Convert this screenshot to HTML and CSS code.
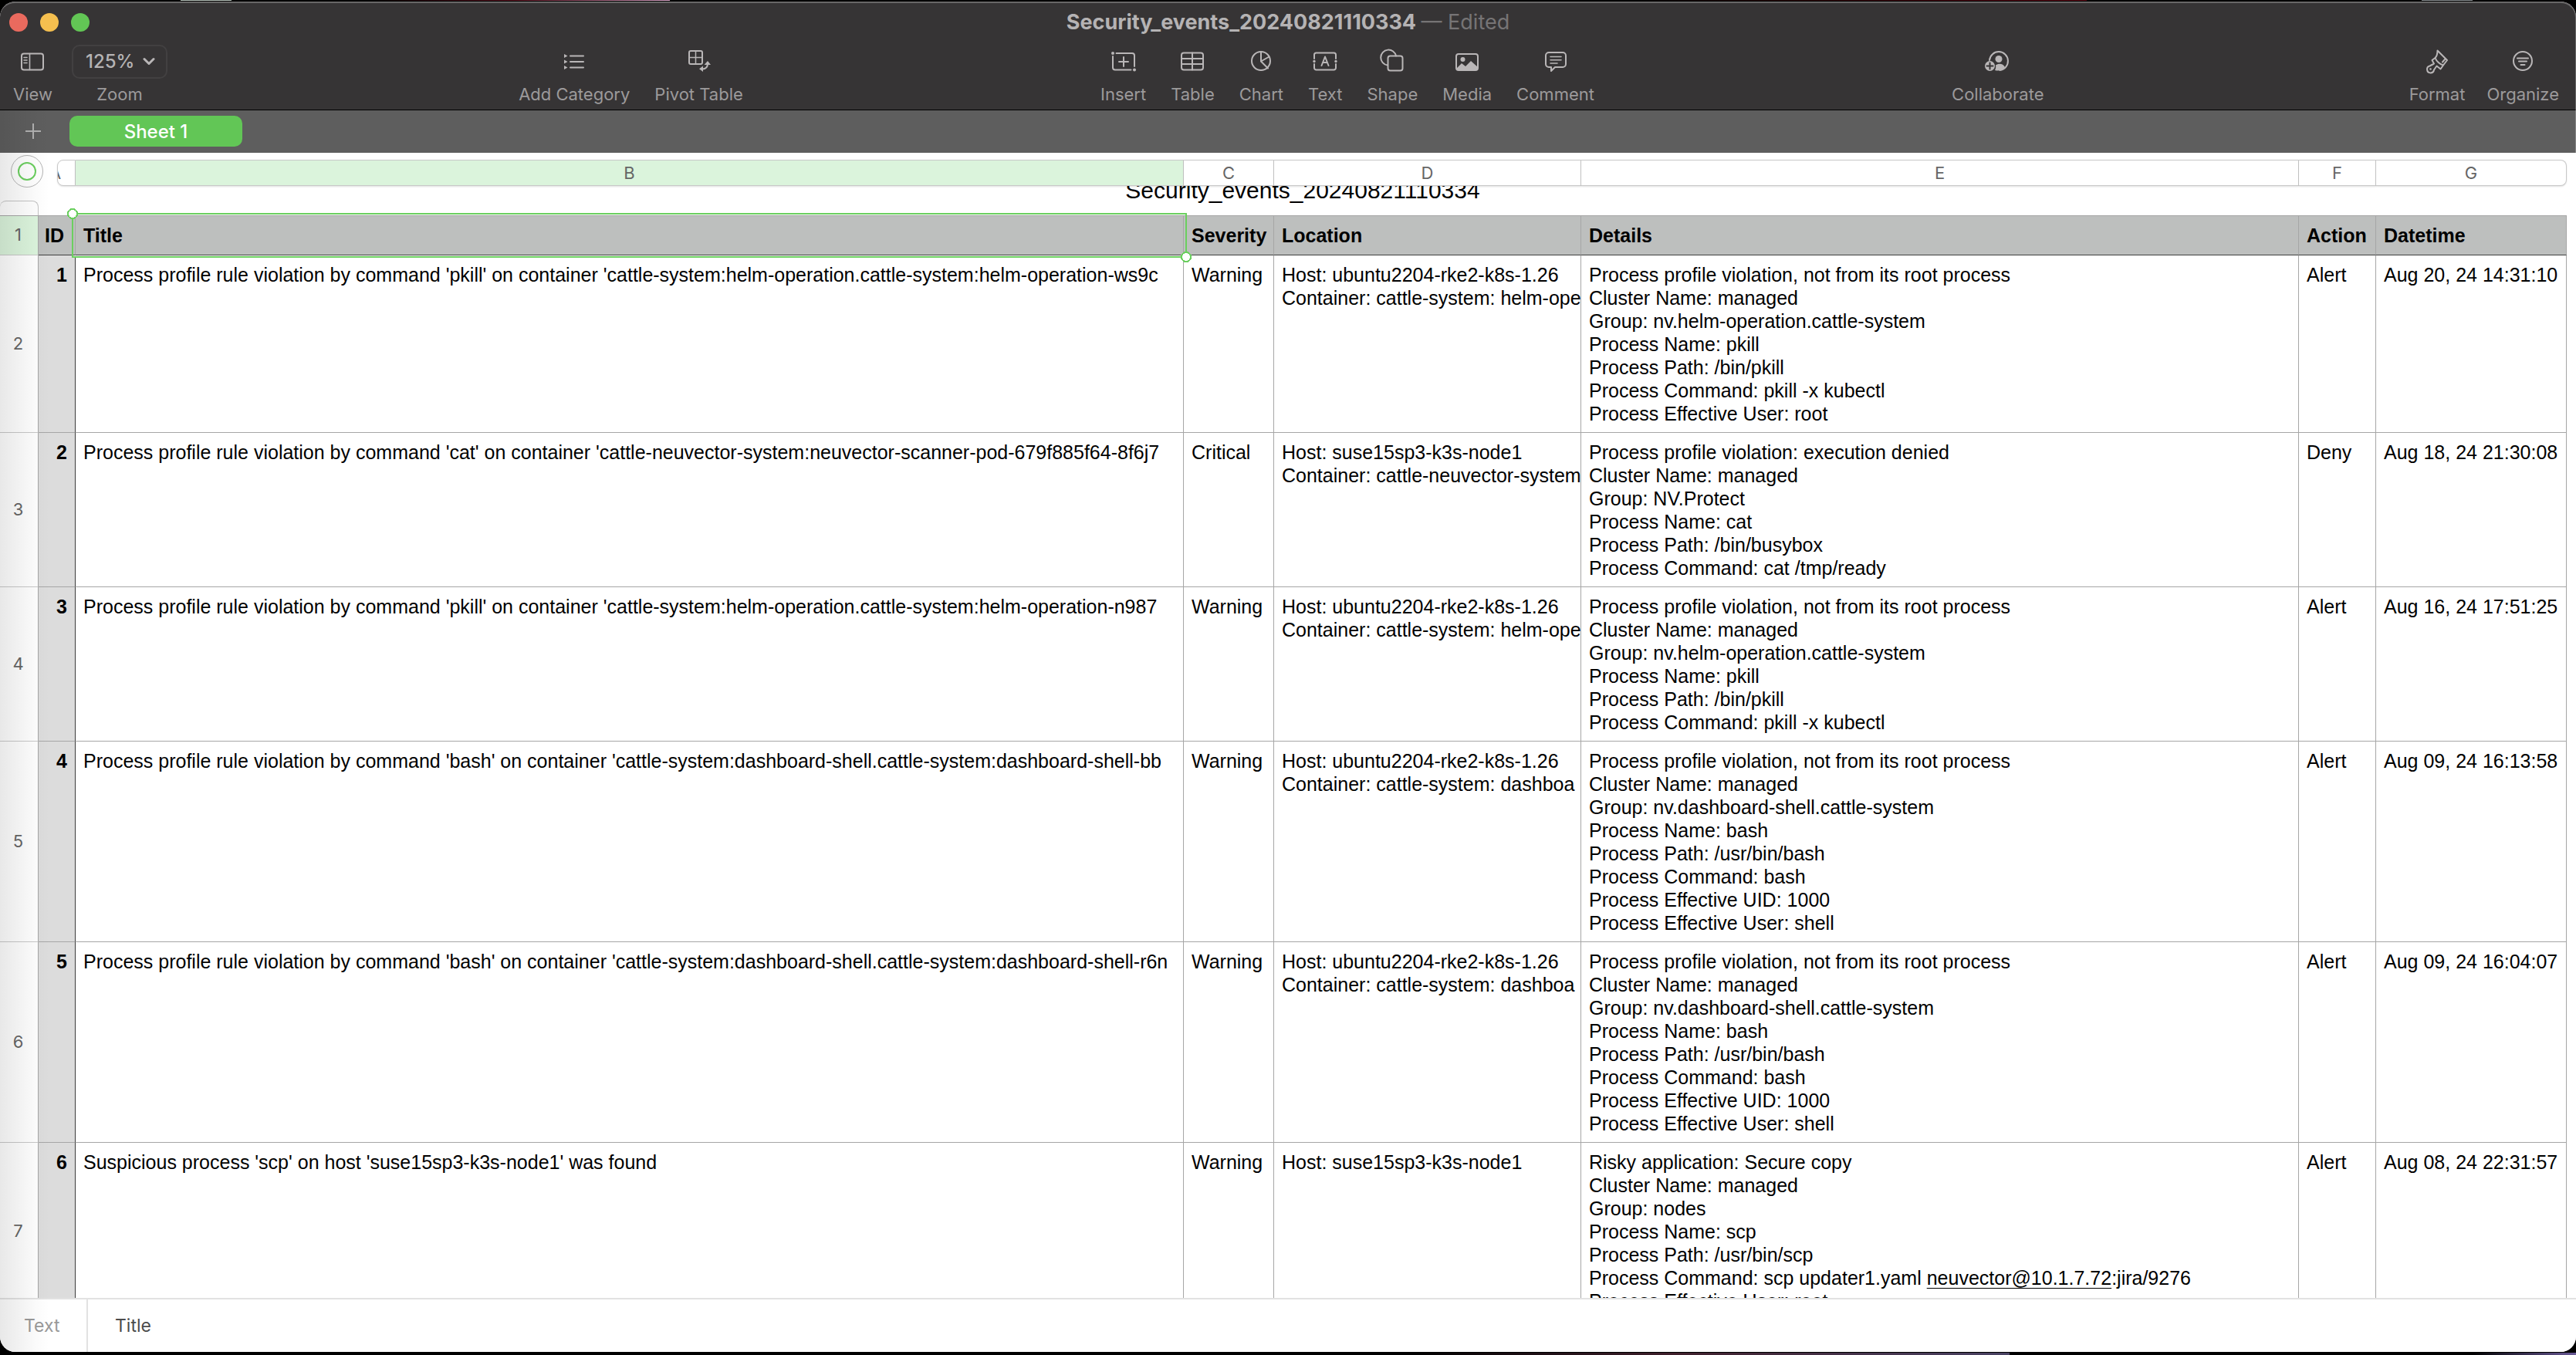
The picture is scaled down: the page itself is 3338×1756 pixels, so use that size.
FILE: index.html
```html
<!DOCTYPE html>
<html lang="en">
<head>
<meta charset="utf-8">
<title>Security_events_20240821110334</title>
<link rel="stylesheet" href="styles.css">
</head>
<body>
<main class="window">
  <header class="chrome">
    <div class="titlebar">
      <div class="lights">
        <button class="light light-close" aria-label="Close"></button>
        <button class="light light-min" aria-label="Minimize"></button>
        <button class="light light-full" aria-label="Full screen"></button>
      </div>
      <h1 class="doc-title">Security_events_20240821110334 <span class="edited">— Edited</span></h1>
    </div>
    <div class="toolbar">
      <div class="tools tools-left">
        <button class="tool">
          <svg class="icon" viewBox="0 0 36 36"><rect x="4" y="7.500" width="28" height="21" rx="3"/><path d="M14.500 7.500v21M7 12.500h4M7 16h4M7 19.500h4" stroke-width="1.600"/></svg>
          <span>View</span>
        </button>
        <div class="tool">
          <div class="zoom-box">
            <select class="zoom-select" id="zoom"><option>125%</option></select>
            <svg class="chevron" viewBox="0 0 16 12"><path d="M2 2.500l6 6 6-6"/></svg>
          </div>
          <label for="zoom">Zoom</label>
        </div>
      </div>
      <div class="tools">
        <button class="tool">
          <svg class="icon" viewBox="0 0 36 36"><path d="M13 10.500h17M13 18h17M13 25.500h17"/><path class="fill" d="M5 8l4.500 2.500L5 13zM5 15.500l4.500 2.500L5 20.500zM5 23l4.500 2.500L5 28z"/></svg>
          <span>Add Category</span>
        </button>
        <button class="tool">
          <svg class="icon" viewBox="0 0 36 36"><rect x="5" y="4" width="17" height="17" rx="2"/><path d="M13.500 4v17M5 12.500h17" stroke-width="1.500"/><path d="M29 20c0 5-2 7.500-7 7.500"/><path class="fill" d="M24.500 22l4.500-5 4 5zM23 23.500v7.500l-5-3.700z"/></svg>
          <span>Pivot Table</span>
        </button>
      </div>
      <div class="tools">
        <button class="tool">
          <svg class="icon" viewBox="0 0 36 36"><path d="M8.500 7H29a3 3 0 0 1 3 3v14M4 11v14.500a3 3 0 0 0 3 3h20.500M18 12v12M12 18h12"/><circle class="fill" cx="4" cy="7" r="2"/><circle class="fill" cx="32" cy="28.500" r="2"/></svg>
          <span>Insert</span>
        </button>
        <button class="tool">
          <svg class="icon" viewBox="0 0 36 36"><rect x="4" y="6.500" width="28" height="22" rx="3"/><path d="M18 6.500v22M4 14h28M4 21h28"/></svg>
          <span>Table</span>
        </button>
        <button class="tool">
          <svg class="icon" viewBox="0 0 36 36"><circle cx="18" cy="17" r="12"/><path d="M18 5v12.500l9 9M18 17.500l10.500-6"/></svg>
          <span>Chart</span>
        </button>
        <button class="tool">
          <svg class="icon" viewBox="0 0 36 36"><path d="M4 14V9a2.500 2.500 0 0 1 2.500-2.500h23A2.500 2.500 0 0 1 32 9v5M4 21v5a2.500 2.500 0 0 0 2.500 2.500h23A2.500 2.500 0 0 0 32 26v-5M13.500 23l4.500-11.500L22.500 23M15 19h6"/><circle class="fill" cx="4" cy="17.500" r="1.700"/><circle class="fill" cx="32" cy="17.500" r="1.700"/></svg>
          <span>Text</span>
        </button>
        <button class="tool">
          <svg class="icon" viewBox="0 0 36 36"><path d="M12 22.500A10 10 0 1 1 23 10.500"/><rect x="12.500" y="10.500" width="19" height="19" rx="3"/></svg>
          <span>Shape</span>
        </button>
        <button class="tool">
          <svg class="icon" viewBox="0 0 36 36"><rect x="4" y="8" width="28" height="21" rx="3"/><circle class="fill" cx="12.500" cy="15" r="3"/><path class="fill" d="M4 27l7-7 5 4 7-7 9 8v4H5z"/></svg>
          <span>Media</span>
        </button>
        <button class="tool">
          <svg class="icon" viewBox="0 0 36 36"><path d="M9 6h18a4 4 0 0 1 4 4v11a4 4 0 0 1-4 4H17l-5 5v-5H9a4 4 0 0 1-4-4V10a4 4 0 0 1 4-4z"/><path d="M11 11.500h14M11 15.700h14M11 20h9" stroke-width="1.600"/></svg>
          <span>Comment</span>
        </button>
      </div>
      <div class="tools tools-share">
        <button class="tool">
          <svg class="icon" viewBox="0 0 36 36"><path d="M7 16a12 12 0 1 1 13.500 13"/><circle class="fill" cx="19" cy="14.500" r="4.500"/><path class="fill" d="M14 29c1-2 1.500-4 1-6.500 4-3 10-2 12 2.500-3 4-8 5.500-13 4z"/><circle class="fill" cx="7.500" cy="23.500" r="6.500"/><path class="cut" d="M7.500 19.500v8M3.500 23.500h8"/></svg>
          <span>Collaborate</span>
        </button>
      </div>
      <div class="tools tools-right">
        <button class="tool">
          <svg class="icon" viewBox="0 0 36 36"><path d="M18.500 3.500L31 16l-5 6.500c-4-.5-9-5.500-10.500-9.500 2-2 3-5 3-9.500zM15.500 13l-4 3 2.500 4.500-5.500 3a4.500 4.500 0 1 0 5.500 5l3.500-5 5 4 3.500-5M28 15l-3 3.500"/><circle class="fill" cx="9.500" cy="27.500" r="1.300"/></svg>
          <span>Format</span>
        </button>
        <button class="tool">
          <svg class="icon" viewBox="0 0 36 36"><circle cx="18" cy="17" r="12"/><path d="M11 13.500h14M13 17.500h10M15.500 22h5"/></svg>
          <span>Organize</span>
        </button>
      </div>
    </div>
  </header>

  <nav class="sheets">
    <button class="add-sheet" aria-label="Add sheet"><svg viewBox="0 0 20 20"><path d="M10 0v20M0 10h20"/></svg></button>
    <button class="sheet-tab">Sheet 1</button>
  </nav>

  <section class="canvas">
    <div class="column-bar">
      <button class="table-handle" aria-label="Select table"></button>
      <div class="letter letter-a">A</div>
      <div class="letter letter-on">B</div>
      <div class="letter">C</div>
      <div class="letter">D</div>
      <div class="letter">E</div>
      <div class="letter">F</div>
      <div class="letter letter-last">G</div>
    </div>
    <div class="caption-row">
      <div class="row-bar-cap"></div>
      <h2 class="table-title">Security_events_20240821110334</h2>
    </div>
    <table class="events">
      <colgroup><col class="c-num"><col class="c-a"><col><col class="c-c"><col class="c-d"><col class="c-e"><col class="c-f"><col class="c-g"></colgroup>
      <thead>
        <tr><th class="num num-on">1</th><th class="id">ID</th><th class="selected">Title</th><th>Severity</th><th>Location</th><th>Details</th><th>Action</th><th>Datetime</th></tr>
      </thead>
      <tbody>
        <tr><th class="num">2</th><th class="id">1</th><td>Process profile rule violation by command 'pkill' on container 'cattle-system:helm-operation.cattle-system:helm-operation-ws9c</td><td>Warning</td><td>Host: ubuntu2204-rke2-k8s-1.26<br>Container: cattle-system: helm-ope</td><td>Process profile violation, not from its root process<br>Cluster Name: managed<br>Group: nv.helm-operation.cattle-system<br>Process Name: pkill<br>Process Path: /bin/pkill<br>Process Command: pkill -x kubectl<br>Process Effective User: root</td><td>Alert</td><td>Aug 20, 24 14:31:10</td></tr>
        <tr><th class="num">3</th><th class="id">2</th><td>Process profile rule violation by command 'cat' on container 'cattle-neuvector-system:neuvector-scanner-pod-679f885f64-8f6j7</td><td>Critical</td><td>Host: suse15sp3-k3s-node1<br>Container: cattle-neuvector-system</td><td>Process profile violation: execution denied<br>Cluster Name: managed<br>Group: NV.Protect<br>Process Name: cat<br>Process Path: /bin/busybox<br>Process Command: cat /tmp/ready</td><td>Deny</td><td>Aug 18, 24 21:30:08</td></tr>
        <tr><th class="num">4</th><th class="id">3</th><td>Process profile rule violation by command 'pkill' on container 'cattle-system:helm-operation.cattle-system:helm-operation-n987</td><td>Warning</td><td>Host: ubuntu2204-rke2-k8s-1.26<br>Container: cattle-system: helm-ope</td><td>Process profile violation, not from its root process<br>Cluster Name: managed<br>Group: nv.helm-operation.cattle-system<br>Process Name: pkill<br>Process Path: /bin/pkill<br>Process Command: pkill -x kubectl</td><td>Alert</td><td>Aug 16, 24 17:51:25</td></tr>
        <tr><th class="num">5</th><th class="id">4</th><td>Process profile rule violation by command 'bash' on container 'cattle-system:dashboard-shell.cattle-system:dashboard-shell-bb</td><td>Warning</td><td>Host: ubuntu2204-rke2-k8s-1.26<br>Container: cattle-system: dashboa</td><td>Process profile violation, not from its root process<br>Cluster Name: managed<br>Group: nv.dashboard-shell.cattle-system<br>Process Name: bash<br>Process Path: /usr/bin/bash<br>Process Command: bash<br>Process Effective UID: 1000<br>Process Effective User: shell</td><td>Alert</td><td>Aug 09, 24 16:13:58</td></tr>
        <tr><th class="num">6</th><th class="id">5</th><td>Process profile rule violation by command 'bash' on container 'cattle-system:dashboard-shell.cattle-system:dashboard-shell-r6n</td><td>Warning</td><td>Host: ubuntu2204-rke2-k8s-1.26<br>Container: cattle-system: dashboa</td><td>Process profile violation, not from its root process<br>Cluster Name: managed<br>Group: nv.dashboard-shell.cattle-system<br>Process Name: bash<br>Process Path: /usr/bin/bash<br>Process Command: bash<br>Process Effective UID: 1000<br>Process Effective User: shell</td><td>Alert</td><td>Aug 09, 24 16:04:07</td></tr>
        <tr><th class="num">7</th><th class="id">6</th><td>Suspicious process 'scp' on host 'suse15sp3-k3s-node1' was found</td><td>Warning</td><td>Host: suse15sp3-k3s-node1</td><td>Risky application: Secure copy<br>Cluster Name: managed<br>Group: nodes<br>Process Name: scp<br>Process Path: /usr/bin/scp<br>Process Command: scp updater1.yaml <a href="mailto:neuvector@10.1.7.72">neuvector@10.1.7.72</a>:jira/9276<br>Process Effective User: root</td><td>Alert</td><td>Aug 08, 24 22:31:57</td></tr>
      </tbody>
    </table>
  </section>

  <footer class="cell-bar">
    <label class="cell-kind" for="cell">Text</label>
    <input class="cell-value" id="cell" value="Title">
  </footer>
</main>
</body>
</html>
```

FILE: styles.css
```css
* { box-sizing: border-box; }

:root {
  --grid-line: #a6a6a6;
  --green: #6bcf5f;
  --icon: #b9b6b7;
  --ui: Inter, "Liberation Sans", sans-serif;
}

body {
  margin: 0;
  height: 100vh;
  padding: 2px 0 4px;
  display: flex;
  overflow: hidden;
  font-family: "Liberation Sans", Arial, sans-serif;
  background:
    linear-gradient(90deg, transparent 7%, #b9c4bc 7% 9%, transparent 9% 14%, #5c1420 20%, #d9a5c8 26%, transparent 26% 62%, #5c0a14 81%, transparent 81% 94%, #8a9092 94% 96%, transparent 96%) top / 100% 1px no-repeat,
    linear-gradient(90deg, transparent 55%, #40202c 65%, #4a4364 78%, transparent 78% 96%, #6a5a98) bottom / 100% 3px no-repeat,
    #000;
}

button, select, input { font: inherit; color: inherit; border: 0; padding: 0; margin: 0; background: none; }

/* Window frame */
.window {
  flex: 1;
  min-width: 0;
  display: flex;
  flex-direction: column;
  position: relative;
  overflow: hidden;
  border-radius: 20px;
  background: #fff;
}
.window::before {
  content: "";
  position: absolute;
  inset: 141px auto 0 0;
  width: 64px;
  z-index: 3;
  pointer-events: none;
  background: linear-gradient(90deg, rgba(0, 0, 0, .09), rgba(0, 0, 0, .02) 70%, transparent);
}
.window::after {
  content: "";
  position: absolute;
  inset: 0 0 auto 0;
  height: 196px;
  z-index: 3;
  pointer-events: none;
  border: solid rgba(255, 255, 255, .25);
  border-width: 2px 1px 0 0;
  border-radius: 20px 20px 0 0;
}

/* Title bar and toolbar */
.chrome { background: #363435; border-bottom: 1px solid #000; font-family: var(--ui); color: #9c9a9b; }
.titlebar { height: 54px; display: grid; grid-template-columns: 1fr auto 1fr; align-items: center; padding: 0 12px; }
.lights { display: flex; gap: 16px; }
.light { width: 24px; height: 24px; border-radius: 50%; }
.light-close { background: #ea6a5e; }
.light-min { background: #f5bf4f; }
.light-full { background: #62c655; }
.doc-title { margin: 0; font-size: 27px; line-height: 32px; font-weight: 700; color: #b5b3b4; }
.edited { font-weight: 400; color: #767475; }
.toolbar { display: flex; justify-content: space-between; padding: 6px 22px 7px 17px; }
.tools { display: flex; gap: 32px; }
.tools-left { gap: 25px; margin-right: -8px; }
.tools-share { margin-right: 10px; }
.tools-right { gap: 28px; }
.tool { display: flex; flex-direction: column; align-items: center; gap: 11px; font-size: 22px; line-height: 26px; }
.icon { width: 36px; height: 36px; fill: none; stroke: var(--icon); stroke-width: 2; stroke-linecap: round; stroke-linejoin: round; }
.icon .fill { fill: var(--icon); stroke: none; }
.icon .cut { stroke: #363435; }
.zoom-box {
  width: 124px;
  height: 44px;
  margin: -4px 0;
  padding: 0 14px 0 16px;
  display: flex;
  align-items: center;
  justify-content: space-between;
  border: 2px solid #424041;
  border-radius: 10px;
}
.zoom-select { appearance: none; font-size: 24px; font-weight: 500; color: #b5b3b4; }
.chevron { width: 16px; height: 12px; fill: none; stroke: var(--icon); stroke-width: 3; stroke-linecap: round; stroke-linejoin: round; }

/* Sheet tabs */
.sheets { height: 55px; flex: none; display: flex; align-items: center; padding: 0 0 1px 33px; background: #5e5e5e; font-family: var(--ui); }
.add-sheet { width: 20px; height: 20px; margin-right: 37px; }
.add-sheet svg { display: block; width: 20px; height: 20px; stroke: #b0b0b0; stroke-width: 2; }
.sheet-tab { width: 224px; height: 40px; border-radius: 10px; background: #62c656; color: #fff; font-size: 24px; font-weight: 500; }

/* Spreadsheet canvas */
.canvas { flex: 1; min-height: 0; overflow: hidden; padding: 3px 12px 0 0; }
.column-bar {
  height: 40px;
  display: grid;
  grid-template-columns: 74px 24px 1fr 117px 398px 930px 100px 247px;
  align-items: start;
  position: relative;
  z-index: 2;
}
.table-handle { width: 42px; height: 42px; margin-left: 14px; border: 1px solid #b4b4b4; border-radius: 50%; background: #fff; display: grid; place-items: center; }
.table-handle::before { content: ""; width: 20px; height: 20px; border: 2px solid var(--green); border-radius: 50%; }
.letter {
  height: 34px;
  margin-top: 6px;
  text-align: center;
  font: 400 22px/32px var(--ui);
  color: #666;
  background: #fff;
  border: solid #c8c8c8;
  border-width: 1px 1px 1px 0;
  box-shadow: 0 1px 2px rgba(0, 0, 0, .12);
}
.letter-a { border-left-width: 1px; border-radius: 8px 0 0 8px; overflow: hidden; text-align: left; text-indent: -11px; }
.letter-on { background: #dbf4dc; }
.letter-last { border-radius: 0 8px 8px 0; }
.caption-row { height: 38px; display: flex; align-items: flex-end; overflow: hidden; }
.row-bar-cap { width: 50px; height: 19px; border: solid #c4c4c4; border-width: 1px 1px 0 0; border-radius: 8px 8px 0 0; background: #fff; }
.table-title { flex: 1; align-self: flex-start; margin: -12px 0 0; text-align: center; font-size: 30px; line-height: 36px; font-weight: 400; color: #000; }

/* Event table */
.events { width: 100%; table-layout: fixed; border-collapse: separate; border-spacing: 0; font-size: 25px; line-height: 30px; color: #000; }
.c-num { width: 50px; }
.c-a { width: 48px; }
.c-c { width: 117px; }
.c-d { width: 398px; }
.c-e { width: 930px; }
.c-f { width: 100px; }
.c-g { width: 247px; }
.events th, .events td {
  padding: 10px 0 9px 10px;
  text-align: left;
  vertical-align: top;
  white-space: nowrap;
  border: solid var(--grid-line);
  border-width: 0 1px 1px 0;
}
.events td { overflow: hidden; }
.events thead th { border-top-width: 1px; border-bottom-color: #3f3f3f; background: #bdbfbe; padding: 10px 0 10px 10px; }
.events .id { padding-right: 10px; padding-left: 0; text-align: right; background: #dcdcdc; border-right-color: #3a3a3a; }
.events thead .id { background: #bdbfbe; padding-right: 14px; border-right-color: var(--grid-line); }
.events .num, .events thead .num { padding: 0 2px 2px 0; text-align: center; vertical-align: middle; font: 400 22px/30px var(--ui); color: #666; background: #fff; }
.events .num { border-bottom-color: #c8c8c8; }
.events thead .num { background: #dbf4dc; }
.events a { color: inherit; text-underline-offset: 4px; text-decoration-thickness: 1px; }
.events .selected { position: relative; }
.selected::before {
  content: "";
  position: absolute;
  inset: -4px -5px;
  border: 2px solid var(--green);
  background: linear-gradient(#fff, #fff) bottom / 100% 1px no-repeat;
}
.selected::after {
  content: "";
  position: absolute;
  inset: -10px -11px;
  background:
    radial-gradient(circle at 7px 7px, #fff 5px, var(--green) 5px 7px, transparent 7px) top left / 14px 14px no-repeat,
    radial-gradient(circle at 7px 7px, #fff 5px, var(--green) 5px 7px, transparent 7px) bottom right / 14px 14px no-repeat;
}

/* Cell contents bar */
.cell-bar { flex: none; height: 70px; display: flex; border-top: 2px solid #e2e2e2; background: #fff; font: 400 23px/28px var(--ui); }
.cell-kind { width: 114px; padding: 20px 0 0 31px; color: #999; border-right: 2px solid #e2e2e2; }
.cell-value { flex: 1; height: 28px; margin: 20px 0 0 35px; color: #4c4c4c; }
```
